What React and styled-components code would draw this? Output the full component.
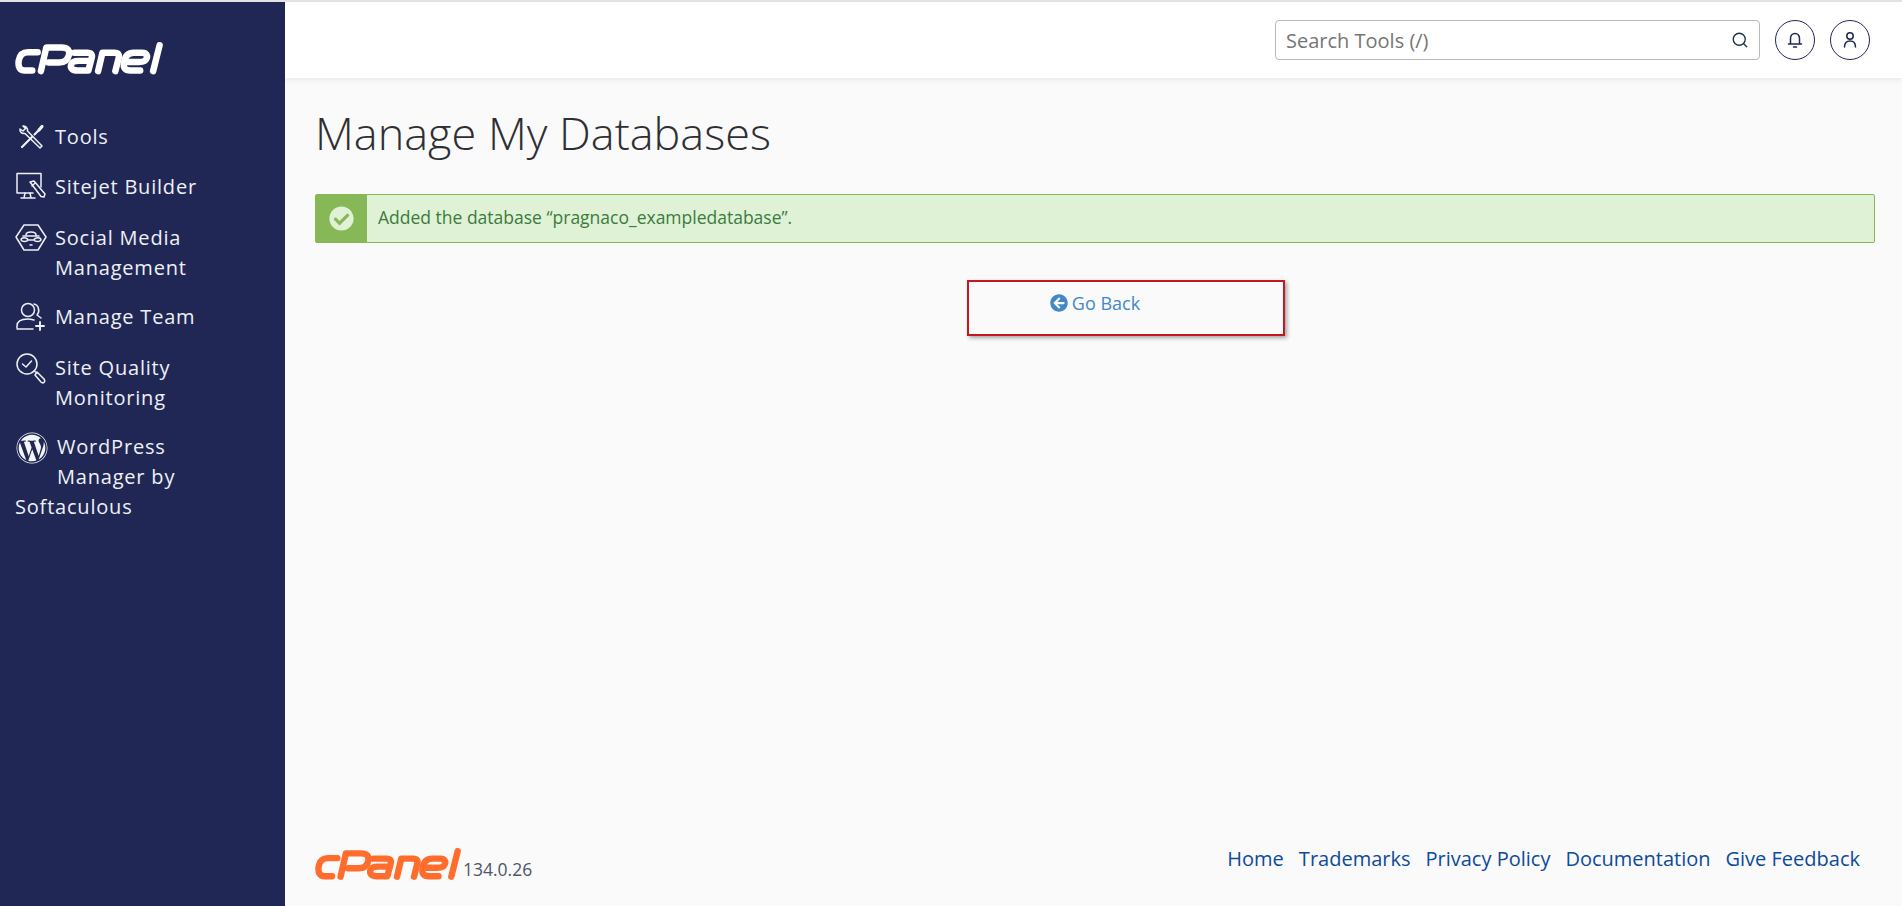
import React from "react";
import styled, { createGlobalStyle } from "styled-components";
import { FaWordpress, FaCheckCircle, FaArrowCircleLeft } from "react-icons/fa";
import { Search } from "lucide-react";

const GlobalStyle = createGlobalStyle`
  html, body {
    margin: 0;
    padding: 0;
    height: 100%;
    overflow: hidden;
    background: #fafafa;
    font-family: "Open Sans", "Liberation Sans", sans-serif;
  }
`;

const Page = styled.div`
  display: flex;
  height: 906px;
  box-sizing: border-box;
  border-top: 2px solid #e4e4e6;
`;

const Sidebar = styled.aside`
  width: 285px;
  flex: none;
  background: #202754;
  color: #eef0f6;
  box-sizing: border-box;
  padding: 40px 30px 0 15px;
`;

const LogoWrap = styled.div`
  height: 38px;
  margin-bottom: 42px;
`;

const Nav = styled.nav`
  display: flex;
  flex-direction: column;
`;

const NavItem = styled.a`
  display: block;
  font-size: 20px;
  line-height: 30px;
  letter-spacing: 0.8px;
  padding-bottom: 19.4px;
  &::after {
    content: "";
    display: block;
    clear: both;
  }
`;

const NavIcon = styled.svg`
  float: left;
  width: 32px;
  height: 32px;
  margin-right: 8px;
  margin-top: -1px;
  fill: none;
  stroke: #eef0f6;
  stroke-width: 1.5;
  stroke-linecap: round;
  stroke-linejoin: round;
`;

const WpIcon = styled(FaWordpress)`
  float: left;
  width: 32px;
  height: 32px;
  margin-left: 1px;
  margin-right: 9px;
  color: #f4f5f8;
`;

const Main = styled.div`
  flex: 1;
  min-width: 0;
  display: flex;
  flex-direction: column;
`;

const Topbar = styled.header`
  height: 76px;
  flex: none;
  background: #fff;
  box-shadow: 0 2px 5px rgba(0, 0, 0, 0.07);
  display: flex;
  align-items: center;
  justify-content: flex-end;
  padding: 4px 32px 4px 0;
  box-sizing: border-box;
  gap: 15px;
`;

const SearchBox = styled.div`
  width: 485px;
  height: 40px;
  box-sizing: border-box;
  border: 1px solid #b9b9b9;
  border-radius: 4px;
  display: flex;
  align-items: center;
  justify-content: space-between;
  padding: 0 10px;
  color: #757575;
  font-size: 20px;
`;

const RoundButton = styled.button`
  width: 40px;
  height: 40px;
  padding: 0;
  border: 1px solid #202754;
  border-radius: 50%;
  background: #fff;
  display: flex;
  align-items: center;
  justify-content: center;
`;

const RoundIcon = styled.svg`
  width: 20px;
  height: 20px;
  fill: none;
  stroke: #202754;
  stroke-width: 1.5;
  stroke-linecap: round;
  stroke-linejoin: round;
`;

const Content = styled.main`
  flex: 1;
  padding: 0 27px 0 30px;
  display: flex;
  flex-direction: column;
`;

const Title = styled.h1`
  margin: 24px 0 0;
  font-size: 45px;
  line-height: 62px;
  font-weight: 300;
  color: #2f2f33;
`;

const Alert = styled.div`
  margin-top: 30px;
  height: 49px;
  box-sizing: border-box;
  display: flex;
  border: 1px solid #86b857;
  border-radius: 2px;
  background: #dff2d5;
`;

const AlertBadge = styled.div`
  width: 51px;
  flex: none;
  background: #86b857;
  display: flex;
  align-items: center;
  justify-content: center;
  color: #dff2d5;
  font-size: 25px;
`;

const AlertText = styled.div`
  padding-left: 11px;
  padding-bottom: 4px;
  display: flex;
  align-items: center;
  font-size: 17.5px;
  color: #3c7a3f;
`;

const BackRow = styled.div`
  position: relative;
  margin-top: 47px;
  text-align: center;
  font-size: 18px;
  line-height: 26px;
`;

const BackLink = styled.a`
  color: #4188c6;
  display: inline-flex;
  align-items: center;
  gap: 4px;
  font-size: 18px;
`;

const Highlight = styled.div`
  position: absolute;
  left: 652px;
  top: -10px;
  width: 318px;
  height: 56px;
  box-sizing: border-box;
  border: 2.5px solid #c8161d;
  box-shadow: 2px 2px 4px rgba(0, 0, 0, 0.35);
`;

const Footer = styled.footer`
  margin-top: auto;
  height: 60px;
  display: flex;
  justify-content: space-between;
  align-items: flex-start;
`;

const Brand = styled.div`
  display: flex;
  align-items: flex-end;
  padding-top: 2px;
`;

const Version = styled.span`
  font-size: 17.5px;
  line-height: 24px;
  color: #4a5866;
`;

const FooterLinks = styled.div`
  display: flex;
  gap: 15px;
  padding-right: 15px;
  font-size: 20px;
  line-height: 26px;
`;

const FooterLink = styled.a`
  color: #0d4a9a;
`;

const LOGO_PATHS = [
  // c
  "M21 9.5 H12 C7 9.5 4.5 12 3.5 17 C2.5 23 4.5 26.5 9 26.5 H16",
  // P
  "M24 27 L29 5 H43 C49 5 51 8 50 12 C49 17 46 19 41 19 H31",
  // a
  "M55 10 H67 C71 10 72 12 71 15 L68 26.5 H58 C53 26.5 51 24 52 21 C53 18 55 17.5 59 17.5 H69",
  // n
  "M77 27 L81 10 H92 C96 10 97 12 96 15 L93 27",
  // e
  "M116 26.5 H107 C102 26.5 100 24 101 19 C102 13 105 10 110 10 H118 C122 10 123 13 122 15 C121 18 118 18.5 115 18.5 H103",
  // l
  "M134 3 L128 27",
];

const Logo = ({ color, width }) => (
  <svg width={width} viewBox="0 0 139 31" fill="none" aria-label="cPanel">
    {LOGO_PATHS.map((d, i) => (
      <path key={i} d={d} stroke={color} strokeWidth="6" strokeLinecap="round" strokeLinejoin="round" />
    ))}
  </svg>
);

const App = () => {
  return (
    <Page>
      <GlobalStyle />
      <Sidebar>
        <LogoWrap>
          <Logo color="#ffffff" width={150} />
        </LogoWrap>
        <Nav>
          <NavItem>
            <NavIcon viewBox="0 0 32 32">
              <path d="M7 26 L17 16 M19.5 13.5 L24 9" strokeWidth="2.2" />
              <path d="M24 9 L27 5.5" strokeWidth="3.2" />
              <path d="M5 8 C4.5 10.5 6.5 13 10 12.5 L25 27 L27 25 L12.5 10 C13 7 10.5 4.5 8 5 L10.5 7.5 L8 10 Z" />
            </NavIcon>
            Tools
          </NavItem>
          <NavItem>
            <NavIcon viewBox="0 0 32 32">
              <path d="M26 16 V2.5 H2 V22 H18" />
              <path d="M10 22 L9 27 M15 22 L16 27 M6 27 H20" />
              <path d="M15 11 L19 10 L30 23 L29 26 L26 25.5 Z M17 15 L20 12" />
            </NavIcon>
            Sitejet Builder
          </NavItem>
          <NavItem>
            <NavIcon viewBox="0 0 32 32">
              <path d="M9 3 H23 L31 15 L23 28 H9 L1 15 Z" />
              <path d="M11 13 C11 9 21 9 21 13 M8 14 H24 M6 18 C6 15 12 15 13 18 C12 20 7 20 6 18 Z M19 18 C20 15 26 15 26 18 C25 20 20 20 19 18 Z M13 18 H19 M15 23 H17" />
            </NavIcon>
            Social Media Management
          </NavItem>
          <NavItem>
            <NavIcon viewBox="0 0 32 32">
              <circle cx="13" cy="9" r="6.5" />
              <path d="M19 3 C24 4 25 11 22 14 L26 17" />
              <path d="M2 27 V25 C2 20 7 18 13 18 C15 18 17 18.5 19 19 M2 28 H18" />
              <path d="M25 21 V29 M21 25 H29" strokeWidth="1.9" />
            </NavIcon>
            Manage Team
          </NavItem>
          <NavItem>
            <NavIcon viewBox="0 0 32 32">
              <circle cx="12" cy="12" r="10" />
              <path d="M7.5 12 L11 15 L16.5 9" />
              <path d="M19 19 L22 21 M22 20 L29 27 C31 30 28 32 26 30 L20 23 Z" />
            </NavIcon>
            Site Quality Monitoring
          </NavItem>
          <NavItem>
            <WpIcon />
            WordPress Manager by Softaculous
          </NavItem>
        </Nav>
      </Sidebar>
      <Main>
        <Topbar>
          <SearchBox>
            <span>Search Tools (/)</span>
            <Search size={18} color="#1f3040" strokeWidth={1.8} />
          </SearchBox>
          <RoundButton aria-label="Notifications">
            <RoundIcon viewBox="0 0 20 20">
              <path d="M5.5 14 V8.5 C5.5 5.5 7.5 3.5 10 3.5 C12.5 3.5 14.5 5.5 14.5 8.5 V14 M3.5 14 H16.5 M8.5 17 H11.5" />
            </RoundIcon>
          </RoundButton>
          <RoundButton aria-label="Account">
            <RoundIcon viewBox="0 0 20 20">
              <circle cx="10" cy="6" r="3.2" />
              <path d="M4.5 17 C4.5 13 7 11 10 11 C13 11 15.5 13 15.5 17" />
            </RoundIcon>
          </RoundButton>
        </Topbar>
        <Content>
          <Title>Manage My Databases</Title>
          <Alert>
            <AlertBadge>
              <FaCheckCircle />
            </AlertBadge>
            <AlertText>Added the database “pragnaco_exampledatabase”.</AlertText>
          </Alert>
          <BackRow>
            <BackLink>
              <FaArrowCircleLeft size={18} />
              Go Back
            </BackLink>
            <Highlight />
          </BackRow>
          <Footer>
            <Brand>
              <Logo color="#ff6c2c" width={148} />
              <Version>134.0.26</Version>
            </Brand>
            <FooterLinks>
              <FooterLink>Home</FooterLink>
              <FooterLink>Trademarks</FooterLink>
              <FooterLink>Privacy Policy</FooterLink>
              <FooterLink>Documentation</FooterLink>
              <FooterLink>Give Feedback</FooterLink>
            </FooterLinks>
          </Footer>
        </Content>
      </Main>
    </Page>
  );
};

export default App;
